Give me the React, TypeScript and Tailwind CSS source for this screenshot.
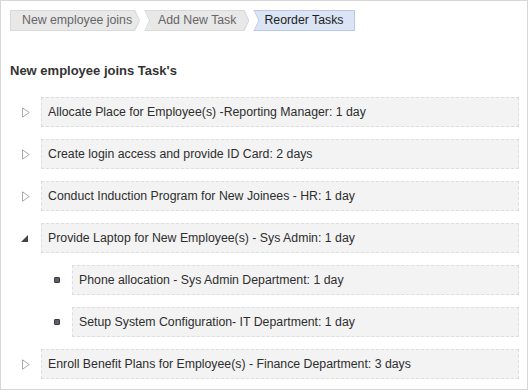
import React from 'react';

type Task = {
  label: string;
  expanded?: boolean;
  children?: string[];
};

const tasks: Task[] = [
  { label: 'Allocate Place for Employee(s) -Reporting Manager: 1 day' },
  { label: 'Create login access and provide ID Card: 2 days' },
  { label: 'Conduct Induction Program for New Joinees - HR: 1 day' },
  {
    label: 'Provide Laptop for New Employee(s) - Sys Admin: 1 day',
    expanded: true,
    children: [
      'Phone allocation - Sys Admin Department: 1 day',
      'Setup System Configuration- IT Department: 1 day',
    ],
  },
  { label: 'Enroll Benefit Plans for Employee(s) - Finance Department: 3 days' },
];

const crumbs = ['New employee joins', 'Add New Task', 'Reorder Tasks'];

const shapes = [
  'polygon(0 0, calc(100% - 5px) 0, 100% 50%, calc(100% - 5px) 100%, 0 100%)',
  'polygon(0 0, calc(100% - 5px) 0, 100% 50%, calc(100% - 5px) 100%, 0 100%, 5px 50%)',
  'polygon(0 0, 100% 0, 100% 100%, 0 100%, 5px 50%)',
];

const pads = ['pl-[11px] pr-[7px]', 'pl-[13px] pr-[12px]', 'pl-[10px] pr-[11px]'];

const Crumb: React.FC<{ label: string; index: number; active: boolean }> = ({ label, index, active }) => (
  <div
    className={`h-[21px] p-px ${active ? 'bg-[#b7c9e6]' : 'bg-[#d9d9d9]'}`}
    style={{ clipPath: shapes[index] }}
  >
    <div
      className={`h-full flex items-center text-[12.3px] leading-none ${
        active ? 'bg-[#dae4f4] text-[#222]' : 'bg-[#e8e8e8] text-[#666]'
      } ${pads[index]}`}
      style={{ clipPath: shapes[index] }}
    >
      {label}
    </div>
  </div>
);

const CollapsedIcon = () => (
  <svg width="8" height="11" viewBox="0 0 8 11">
    <path d="M0.5 0.8 L7.2 5.5 L0.5 10.2 Z" fill="none" stroke="#a9a9a9" strokeWidth="1" />
  </svg>
);

const ExpandedIcon = () => (
  <svg width="7" height="7" viewBox="0 0 7 7">
    <path d="M7 0 L7 7 L0 7 Z" fill="#444" />
  </svg>
);

const Bullet = () => (
  <span className="block w-[6px] h-[6px] rounded-[1px] bg-[#5c6068] border border-[#3a3d42]" />
);

const Box: React.FC<{ children: React.ReactNode }> = ({ children }) => (
  <div className="flex-1 h-[30px] flex items-center pl-[6px] bg-[#f3f3f3] border border-dashed border-[#dedede] text-[12.3px] text-[#2e2e2e]">
    {children}
  </div>
);

export default function App() {
  return (
    <div className="w-[528px] h-[390px] border border-[#d6d6d6] bg-white font-['Liberation_Sans',Arial,sans-serif] overflow-hidden">
      <div className="flex gap-[4px] pt-[9px] pl-[9px]">
        {crumbs.map((c, i) => (
          <Crumb key={c} label={c} index={i} active={i === crumbs.length - 1} />
        ))}
      </div>

      <h2 className="mt-[32px] pl-[9px] text-[13px] leading-[16px] font-bold text-[#333]">
        New employee joins Task's
      </h2>

      <div className="mt-[18px] pl-[9px] pr-[8px] flex flex-col gap-[12px]">
        {tasks.map((t) => (
          <div key={t.label} className="flex flex-col gap-[12px]">
            <div className="flex items-center">
              <div className="w-[31px] flex items-center">
                {t.expanded ? (
                  <span className="ml-[11px] mt-[1px]">
                    <ExpandedIcon />
                  </span>
                ) : (
                  <span className="ml-[12px]">
                    <CollapsedIcon />
                  </span>
                )}
              </div>
              <Box>{t.label}</Box>
            </div>
            {t.expanded &&
              t.children?.map((c) => (
                <div key={c} className="flex items-center pl-[31px]">
                  <div className="w-[31px] flex items-center">
                    <span className="ml-[13px]">
                      <Bullet />
                    </span>
                  </div>
                  <Box>{c}</Box>
                </div>
              ))}
          </div>
        ))}
      </div>
    </div>
  );
}
